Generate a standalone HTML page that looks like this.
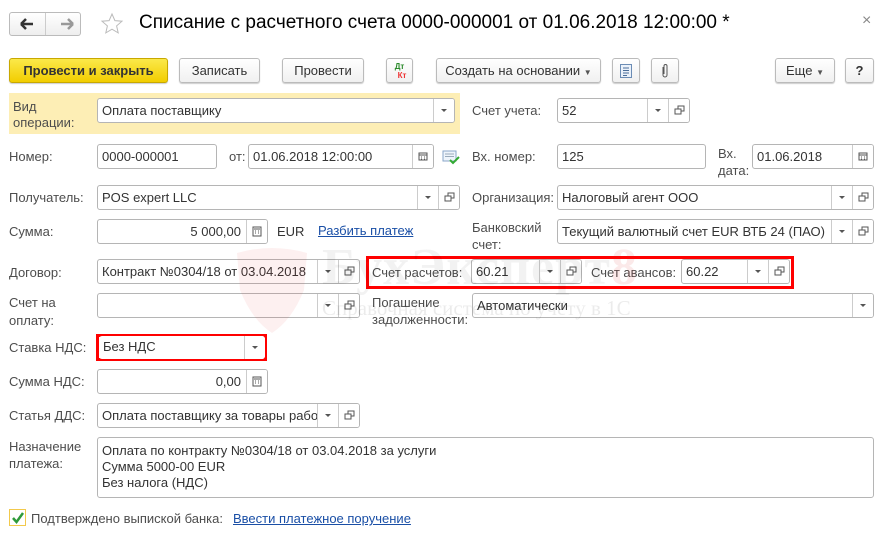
<!DOCTYPE html>
<html><head><meta charset="utf-8"><style>
*{margin:0;padding:0;box-sizing:border-box}
body{width:883px;height:536px;background:#fff;position:relative;overflow:hidden;font-family:"Liberation Sans",Arial,sans-serif;font-size:13px;color:#4d4d4d}
.a{position:absolute;white-space:nowrap}
.l{position:absolute;line-height:16px;color:#4d4d4d}
.f{position:absolute;border:1px solid #b5b5b5;border-radius:3px;background:#fff;height:25px;line-height:23px;padding-left:4px;color:#333;white-space:nowrap;overflow:hidden}
.s{position:absolute;top:0;bottom:0;width:21px;border-left:1px solid #ccc;background:#fff}
.dd:after{content:"";position:absolute;left:7px;top:10px;border-left:3px solid transparent;border-right:3px solid transparent;border-top:3px solid #555}
.btn{position:absolute;top:58px;height:25px;border:1px solid #bbb;border-radius:3px;background:linear-gradient(#fff,#f0f0f0);box-shadow:0 1px 1px #ccc;text-align:center;line-height:23px;color:#333;font-size:13px}
.red{position:absolute;border:3px solid #f00}
a{color:#1a4fa6;text-decoration:underline}
.wm{position:absolute;z-index:10;pointer-events:none;white-space:nowrap}
</style></head><body>

<!-- header -->
<div class="a" style="left:9px;top:12px;width:72px;height:24px;border:1px solid #bbb;border-radius:3px;background:linear-gradient(#fff,#eee)"></div>
<div class="a" style="left:45px;top:13px;width:1px;height:22px;background:#ccc"></div>
<svg class="a" style="left:18px;top:17px" width="60" height="14"><path d="M3 7h12M3 7l5-5M3 7l5 5" stroke="#333" stroke-width="2.5" fill="none"/><path d="M43 7h12M55 7l-5-5M55 7l-5 5" stroke="#999" stroke-width="2.5" fill="none"/></svg>
<svg class="a" style="left:100px;top:12px" width="24" height="24"><path d="M12 2l2.9 6.6 7.1.6-5.4 4.7 1.6 7-6.2-3.7-6.2 3.7 1.6-7L2 9.2l7.1-.6z" fill="none" stroke="#bbb" stroke-width="1"/></svg>
<div class="a" style="left:139px;top:12px;font-size:19px;color:#000">Списание с расчетного счета 0000-000001 от 01.06.2018 12:00:00 *</div>
<div class="a" style="left:862px;top:12px;font-size:16px;color:#888">×</div>

<!-- toolbar -->
<div class="btn" style="left:9px;width:159px;background:linear-gradient(#fbe94a,#f2cd00);border-color:#c8a800;font-weight:bold;color:#333">Провести и закрыть</div>
<div class="btn" style="left:179px;width:81px">Записать</div>
<div class="btn" style="left:282px;width:82px">Провести</div>
<div class="btn" style="left:386px;width:27px;font-size:8px;line-height:9px;font-weight:bold;padding-top:3px"><span style="color:#2a8a2a">Дт</span><br><span style="color:#e33;padding-left:5px">Кт</span></div>
<div class="btn" style="left:436px;width:165px">Создать на основании <span style="font-size:8px;color:#555">▼</span></div>
<div class="btn" style="left:612px;width:28px"><svg width="12" height="14" style="margin-top:5px"><rect x="0.5" y="0.5" width="11" height="13" fill="#eaf1fa" stroke="#6b8cb5"/><path d="M3 4h6M3 6.5h6M3 9h6M3 11.5h4" stroke="#4a6d99"/></svg></div>
<div class="btn" style="left:651px;width:28px"><svg width="8" height="14" style="margin-top:5px"><path d="M2 3v8a2 2 0 0 0 4 0V2a1.5 1.5 0 0 0-3 0v8" fill="none" stroke="#555"/></svg></div>
<div class="btn" style="left:775px;width:60px">Еще <span style="font-size:8px;color:#555">▼</span></div>
<div class="btn" style="left:845px;width:29px;font-weight:bold">?</div>

<!-- yellow band -->
<div class="a" style="left:9px;top:93px;width:451px;height:41px;background:#fdeeb5"></div>
<div class="l" style="left:13px;top:99px">Вид<br>операции:</div>
<div class="f" style="left:97px;top:98px;width:358px">Оплата поставщику<div class="s dd" style="right:0"></div></div>

<div class="l" style="left:472px;top:103px">Счет учета:</div>
<div class="f" style="left:557px;top:98px;width:133px">52<div class="s dd" style="right:21px"></div><div class="s" style="right:0"><svg width="20" height="23"><rect x="9" y="7" width="6" height="5" fill="none" stroke="#555"/><rect x="6" y="10" width="6" height="5" fill="#fff" stroke="#555"/></svg></div></div>

<!-- row2 -->
<div class="l" style="left:9px;top:149px">Номер:</div>
<div class="f" style="left:97px;top:144px;width:120px">0000-000001</div>
<div class="l" style="left:229px;top:149px">от:</div>
<div class="f" style="left:248px;top:144px;width:186px">01.06.2018 12:00:00<div class="s" style="right:0"><svg width="20" height="23"><rect x="6" y="8" width="8" height="7" fill="none" stroke="#555"/><path d="M6 10h8M8 12h1M11 12h1M8 14h1M11 14h1" stroke="#555"/></svg></div></div>
<svg class="a" style="left:442px;top:149px" width="18" height="16"><rect x="1" y="2" width="13" height="10" fill="#eef4fb" stroke="#8aa6c8"/><path d="M3 5h9M3 7.5h9" stroke="#9ab"/><path d="M8 11l3 3 6-6" stroke="#3a3" stroke-width="2" fill="none"/></svg>
<div class="l" style="left:472px;top:149px">Вх. номер:</div>
<div class="f" style="left:557px;top:144px;width:149px">125</div>
<div class="l" style="left:718px;top:145px;line-height:17px">Вх.<br>дата:</div>
<div class="f" style="left:752px;top:144px;width:122px">01.06.2018<div class="s" style="right:0"><svg width="20" height="23"><rect x="6" y="8" width="8" height="7" fill="none" stroke="#555"/><path d="M6 10h8M8 12h1M11 12h1M8 14h1M11 14h1" stroke="#555"/></svg></div></div>

<!-- row3 -->
<div class="l" style="left:9px;top:190px">Получатель:</div>
<div class="f" style="left:97px;top:185px;width:363px">POS expert LLC<div class="s dd" style="right:21px"></div><div class="s" style="right:0"><svg width="20" height="23"><rect x="9" y="7" width="6" height="5" fill="none" stroke="#555"/><rect x="6" y="10" width="6" height="5" fill="#fff" stroke="#555"/></svg></div></div>
<div class="l" style="left:472px;top:190px">Организация:</div>
<div class="f" style="left:557px;top:185px;width:317px">Налоговый агент ООО<div class="s dd" style="right:21px"></div><div class="s" style="right:0"><svg width="20" height="23"><rect x="9" y="7" width="6" height="5" fill="none" stroke="#555"/><rect x="6" y="10" width="6" height="5" fill="#fff" stroke="#555"/></svg></div></div>

<!-- row4 -->
<div class="l" style="left:9px;top:224px">Сумма:</div>
<div class="f" style="left:97px;top:219px;width:171px;text-align:right;padding-right:26px">5 000,00<div class="s" style="right:0"><svg width="20" height="23"><rect x="6" y="7" width="8" height="9" fill="none" stroke="#555"/><path d="M7 9h6M8 11h1M11 11h1M8 13h1M11 13h1" stroke="#555"/></svg></div></div>
<div class="l" style="left:277px;top:224px;color:#333">EUR</div>
<div class="l" style="left:318px;top:223px"><a>Разбить платеж</a></div>
<div class="l" style="left:472px;top:219px;line-height:17px">Банковский<br>счет:</div>
<div class="f" style="left:557px;top:219px;width:317px">Текущий валютный счет EUR ВТБ 24 (ПАО)<div class="s dd" style="right:21px"></div><div class="s" style="right:0"><svg width="20" height="23"><rect x="9" y="7" width="6" height="5" fill="none" stroke="#555"/><rect x="6" y="10" width="6" height="5" fill="#fff" stroke="#555"/></svg></div></div>

<!-- row5 -->
<div class="l" style="left:9px;top:265px">Договор:</div>
<div class="f" style="left:97px;top:259px;width:263px">Контракт №0304/18 от 03.04.2018<div class="s dd" style="right:21px"></div><div class="s" style="right:0"><svg width="20" height="23"><rect x="9" y="7" width="6" height="5" fill="none" stroke="#555"/><rect x="6" y="10" width="6" height="5" fill="#fff" stroke="#555"/></svg></div></div>
<div class="red" style="left:366px;top:256px;width:428px;height:33px"></div>
<div class="l" style="left:372px;top:265px">Счет расчетов:</div>
<div class="f" style="left:471px;top:259px;width:111px">60.21<div class="s dd" style="right:21px"></div><div class="s" style="right:0"><svg width="20" height="23"><rect x="9" y="7" width="6" height="5" fill="none" stroke="#555"/><rect x="6" y="10" width="6" height="5" fill="#fff" stroke="#555"/></svg></div></div>
<div class="l" style="left:591px;top:265px">Счет авансов:</div>
<div class="f" style="left:681px;top:259px;width:109px">60.22<div class="s dd" style="right:21px"></div><div class="s" style="right:0"><svg width="20" height="23"><rect x="9" y="7" width="6" height="5" fill="none" stroke="#555"/><rect x="6" y="10" width="6" height="5" fill="#fff" stroke="#555"/></svg></div></div>

<!-- row6 -->
<div class="l" style="left:9px;top:294px;line-height:18px">Счет на<br>оплату:</div>
<div class="f" style="left:97px;top:293px;width:263px"><div class="s dd" style="right:21px"></div><div class="s" style="right:0"><svg width="20" height="23"><rect x="9" y="7" width="6" height="5" fill="none" stroke="#555"/><rect x="6" y="10" width="6" height="5" fill="#fff" stroke="#555"/></svg></div></div>
<div class="l" style="left:372px;top:294px;line-height:17px">Погашение<br>задолженности:</div>
<div class="f" style="left:472px;top:293px;width:402px">Автоматически<div class="s dd" style="right:0"></div></div>

<!-- row7 -->
<div class="l" style="left:9px;top:340px">Ставка НДС:</div>
<div class="red" style="left:96px;top:334px;width:171px;height:27px"></div>
<div class="f" style="left:99px;top:336px;width:166px;height:23px;line-height:21px;border:none">Без НДС<div class="s dd" style="right:0;top:0;border-left:1px solid #ccc"></div></div>

<div class="l" style="left:9px;top:374px">Сумма НДС:</div>
<div class="f" style="left:97px;top:369px;width:171px;text-align:right;padding-right:26px">0,00<div class="s" style="right:0"><svg width="20" height="23"><rect x="6" y="7" width="8" height="9" fill="none" stroke="#555"/><path d="M7 9h6M8 11h1M11 11h1M8 13h1M11 13h1" stroke="#555"/></svg></div></div>

<div class="l" style="left:9px;top:408px">Статья ДДС:</div>
<div class="f" style="left:97px;top:403px;width:263px">Оплата поставщику за товары работ<div class="s dd" style="right:21px"></div><div class="s" style="right:0"><svg width="20" height="23"><rect x="9" y="7" width="6" height="5" fill="none" stroke="#555"/><rect x="6" y="10" width="6" height="5" fill="#fff" stroke="#555"/></svg></div></div>

<div class="l" style="left:9px;top:438px;line-height:17px">Назначение<br>платежа:</div>
<div class="f" style="left:97px;top:437px;width:777px;height:61px;line-height:16px;padding-top:5px;white-space:normal">Оплата по контракту №0304/18 от 03.04.2018 за услуги<br>Сумма 5000-00 EUR<br>Без налога (НДС)</div>

<div class="a" style="left:9px;top:509px;width:17px;height:17px;border:1px solid #f2c94c;background:#fff"></div>
<svg class="a" style="left:10px;top:510px" width="16" height="16"><path d="M3 8l3.5 4L13 3" stroke="#2e9a3a" stroke-width="2.5" fill="none"/></svg>
<div class="l" style="left:31px;top:511px">Подтверждено выпиской банка:</div>
<div class="l" style="left:233px;top:511px"><a>Ввести платежное поручение</a></div>

<!-- watermark overlay -->
<svg class="wm" style="left:232px;top:245px" width="80" height="90"><path d="M5 8 Q40 -2 75 8 L72 45 Q60 75 40 88 Q20 75 8 45 Z" fill="rgba(220,40,40,0.07)"/></svg>
<div class="wm" style="left:322px;top:238px;font-family:'Liberation Serif',serif;font-weight:bold;font-size:52px;color:rgba(0,0,0,0.05);letter-spacing:1px">БухЭксперт<span style="color:rgba(220,40,40,0.1)">8</span></div>
<div class="wm" style="left:322px;top:296px;font-family:'Liberation Serif',serif;font-size:21px;color:rgba(0,0,0,0.08)">Справочная система по учёту в 1С</div>
</body></html>
